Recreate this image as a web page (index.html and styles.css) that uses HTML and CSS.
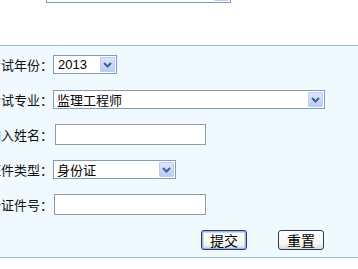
FILE: index.html
```html
<!DOCTYPE html>
<html>
<head>
<meta charset="utf-8">
<link rel="stylesheet" href="styles.css">
</head>
<body>
<div class="top">
  <div class="sel topsel"><span class="val"></span><span class="arrow"><svg width="9" height="6" viewBox="0 0 9 6"><path d="M1 1 L4.5 4.5 L8 1" fill="none" stroke="#4a5f87" stroke-width="2"/></svg></span></div>
</div>
<div class="panel">
  <div class="row">
    <div class="label">考试年份：</div>
    <div class="sel year"><span class="val">2013</span><span class="arrow"><svg width="9" height="6" viewBox="0 0 9 6"><path d="M1 1 L4.5 4.5 L8 1" fill="none" stroke="#4a5f87" stroke-width="2"/></svg></span></div>
  </div>
  <div class="row">
    <div class="label">考试专业：</div>
    <div class="sel major"><span class="val cjk">监理工程师</span><span class="arrow"><svg width="9" height="6" viewBox="0 0 9 6"><path d="M1 1 L4.5 4.5 L8 1" fill="none" stroke="#4a5f87" stroke-width="2"/></svg></span></div>
  </div>
  <div class="row">
    <div class="label">请输入姓名：</div>
    <div class="inp name"></div>
  </div>
  <div class="row">
    <div class="label">证件类型：</div>
    <div class="sel idtype"><span class="val cjk">身份证</span><span class="arrow"><svg width="9" height="6" viewBox="0 0 9 6"><path d="M1 1 L4.5 4.5 L8 1" fill="none" stroke="#4a5f87" stroke-width="2"/></svg></span></div>
  </div>
  <div class="row">
    <div class="label">身份证件号：</div>
    <div class="inp idno"></div>
  </div>
  <div class="row btns">
    <button class="btn default">提交</button>
    <button class="btn">重置</button>
  </div>
</div>
</body>
</html>
```
FILE: styles.css
```css
html, body {
  margin: 0;
  padding: 0;
  background: #ffffff;
}
html {
  overflow: hidden;
}
body {
  font-family: "Noto Sans CJK SC", "Liberation Sans", sans-serif;
  font-size: 13px;
  color: #000;
}
.top {
  height: 45px;
  background: #fff;
  overflow: hidden;
}
.topsel {
  margin-top: -16px;
  margin-left: 46px;
  width: 185px;
}
.panel {
  background: #f0f9fd;
  border-top: 1px solid #8cc3c8;
  border-bottom: 1px solid #8cc3c8;
  padding-top: 1px;
}
.row {
  height: 35px;
  display: flex;
  align-items: center;
}
.label {
  width: 53px;
  flex: none;
  display: flex;
  justify-content: flex-end;
  white-space: nowrap;
  line-height: 16px;
  font-size: 13px;
  color: #111;
}
.sel {
  box-sizing: border-box;
  height: 19px;
  border: 1px solid #7f9db9;
  background: #fff;
  display: flex;
  align-items: center;
  justify-content: space-between;
  padding: 1px;
}
.val {
  font-family: "Liberation Sans", "Noto Sans CJK SC", sans-serif;
  font-size: 13px;
  padding-left: 3px;
  line-height: 15px;
}
.val.cjk {
  font-family: "Noto Sans CJK SC", sans-serif;
  padding-left: 2px;
}
.arrow {
  width: 15px;
  height: 15px;
  box-sizing: border-box;
  border: 1px solid #bccdf1;
  border-radius: 1px;
  background: linear-gradient(#dbe6fd, #b9cdf7);
  display: flex;
  align-items: center;
  justify-content: center;
}
.year { width: 64px; }
.major { width: 272px; }
.idtype { width: 123px; }
.inp {
  box-sizing: border-box;
  height: 21px;
  border: 1px solid #8f9ca8;
  background: #fff;
}
.name { width: 151px; margin-left: 2px; }
.idno { width: 152px; margin-left: 1px; }
.btns {
  padding-left: 201px;
  gap: 31px;
}
.btn {
  box-sizing: border-box;
  width: 46px;
  height: 20px;
  margin: 0;
  padding: 0;
  border: 1px solid #1e3c6e;
  border-radius: 3px;
  background: linear-gradient(#ffffff, #f6f6f2 70%, #dedcd2);
  font-family: "Noto Sans CJK SC", sans-serif;
  font-size: 14px;
  line-height: 16px;
  color: #000;
}
.btn.default {
  box-shadow: inset 0 0 0 1px #9cb6e6, inset 0 0 0 2px #c8d8f4;
}
```
